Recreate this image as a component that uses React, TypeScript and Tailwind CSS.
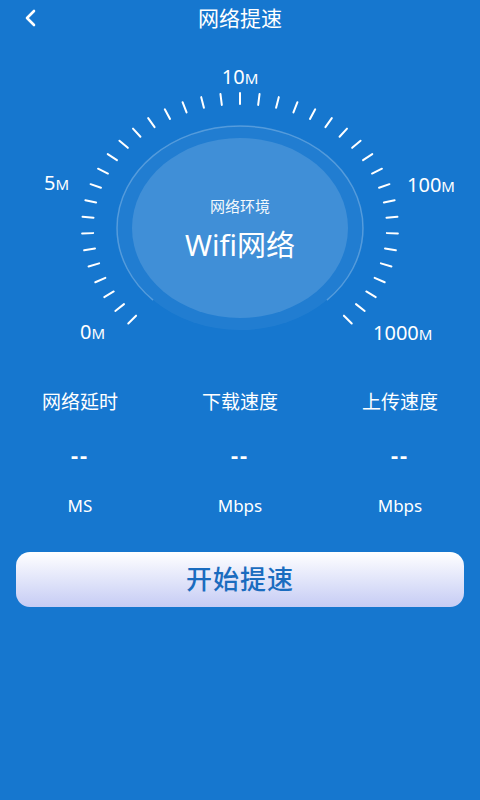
import React from "react";

const CX = 240;
const CY = 228;

const ticks = Array.from({ length: 39 }, (_, i) => {
  const a = ((-135 + (270 / 38) * i) * Math.PI) / 180;
  const s = Math.sin(a);
  const c = Math.cos(a);
  return {
    x1: CX + 147 * s,
    y1: CY - 124 * c,
    x2: CX + 158 * s,
    y2: CY - 135 * c,
  };
});

// thin ring open at the bottom, from -135deg to 135deg
const ringStart = { x: CX - 123 * Math.SQRT1_2, y: CY + 102 * Math.SQRT1_2 };
const ringEnd = { x: CX + 123 * Math.SQRT1_2, y: CY + 102 * Math.SQRT1_2 };

function GaugeLabel({ x, y, n, anchor = "middle" }: { x: number; y: number; n: string; anchor?: "start" | "middle" | "end" }) {
  return (
    <text x={x} y={y} textAnchor={anchor} fill="#fff" fontSize={20}>
      {n}
      <tspan fontSize={15}>M</tspan>
    </text>
  );
}

function Stat({ label, unit }: { label: string; unit: string }) {
  return (
    <div className="flex flex-col items-center text-white">
      <div className="text-[19px] leading-[24px]">{label}</div>
      <div className="mt-[28px] text-[22px] font-bold leading-[24px] tracking-[2px]">--</div>
      <div className="mt-[28px] text-[17px] leading-[24px]">{unit}</div>
    </div>
  );
}

export default function App() {
  return (
    <div
      className="flex h-[800px] w-[480px] flex-col overflow-hidden bg-[#1677cf]"
      style={{ fontFamily: '"Noto Sans", "Noto Sans CJK SC", sans-serif' }}
    >
      <div className="relative flex h-[36px] items-center justify-center">
        <svg className="absolute left-[22px] top-[8px]" width="18" height="20" viewBox="0 0 18 20">
          <path d="M12 3 L5 10 L12 17" fill="none" stroke="#fff" strokeWidth="2.6" strokeLinecap="round" strokeLinejoin="round" />
        </svg>
        <div className="text-[21px] leading-[28px] text-white">网络提速</div>
      </div>

      <div className="relative h-[314px] w-[480px]">
        <svg width="480" height="314" viewBox="0 36 480 314" className="block">
          <ellipse cx={CX} cy={CY} rx={123} ry={102} fill="rgba(255,255,255,0.05)" />
          <path
            d={`M ${ringStart.x} ${ringStart.y} A 123 102 0 1 1 ${ringEnd.x} ${ringEnd.y}`}
            fill="none"
            stroke="rgba(255,255,255,0.25)"
            strokeWidth="1.5"
          />
          <ellipse cx={CX} cy={CY} rx={108} ry={90} fill="rgba(255,255,255,0.14)" />
          {ticks.map((t, i) => (
            <line key={i} x1={t.x1} y1={t.y1} x2={t.x2} y2={t.y2} stroke="#fff" strokeWidth="2" strokeLinecap="round" />
          ))}
          <GaugeLabel x={240} y={84} n="10" />
          <GaugeLabel x={44} y={190} n="5" anchor="start" />
          <GaugeLabel x={407} y={192} n="100" anchor="start" />
          <GaugeLabel x={80} y={339} n="0" anchor="start" />
          <GaugeLabel x={373} y={340} n="1000" anchor="start" />
        </svg>
        <div className="absolute left-0 top-[159px] flex w-full flex-col items-center text-white">
          <div className="text-[15px] leading-[22px] opacity-95">网络环境</div>
          <div className="mt-[10px] text-[29px] leading-[36px]">Wifi网络</div>
        </div>
      </div>

      <div className="mt-[40px] grid grid-cols-3">
        <Stat label="网络延时" unit="MS" />
        <Stat label="下载速度" unit="Mbps" />
        <Stat label="上传速度" unit="Mbps" />
      </div>

      <div className="px-[16px] pt-[34px]">
        <button
          type="button"
          className="flex h-[55px] w-full items-center justify-center rounded-[14px] bg-gradient-to-b from-white to-[#c6ccf4] text-[26px] font-medium tracking-[1px] text-[#1a6cbf]"
        >
          开始提速
        </button>
      </div>
    </div>
  );
}
